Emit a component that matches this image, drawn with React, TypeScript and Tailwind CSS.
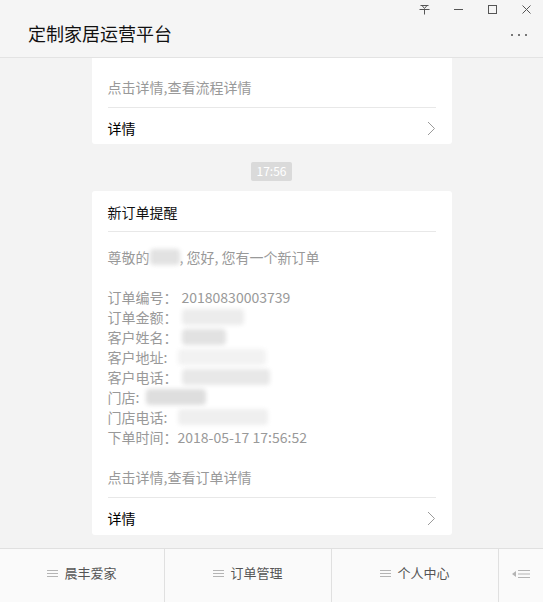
import React from 'react';

const font = { fontFamily: '"Noto Sans CJK SC", "Noto Sans", sans-serif' };

function Blur({ w, shade = 'bg-[#e4e4e4]', ml = 'ml-0' }: { w: string; shade?: string; ml?: string }) {
  return <span className={`inline-block align-middle h-[16px] ${w} ${ml} ${shade} rounded-sm blur-[2px]`} />;
}

function Chevron() {
  return (
    <svg width="9" height="15" viewBox="0 0 9 15" fill="none">
      <path d="M1 1 L7.5 7.5 L1 14" stroke="#9a9a9a" strokeWidth="1" />
    </svg>
  );
}

function MenuLines() {
  return (
    <svg width="11" height="9" viewBox="0 0 11 9" className="mr-[6px]">
      <path d="M0 1.5h11M0 4.5h11M0 7.5h11" stroke="#b4b4b4" strokeWidth="1" />
    </svg>
  );
}

export default function App() {
  const rows: [string, React.ReactNode][] = [
    ['订单编号：', <span className="ml-1">20180830003739</span>],
    ['订单金额：', <Blur w="w-[62px]" shade="bg-[#ececec]" ml="ml-1" />],
    ['客户姓名：', <Blur w="w-[44px]" shade="bg-[#e2e2e2]" ml="ml-1" />],
    ['客户地址:', <Blur w="w-[88px]" shade="bg-[#f2f2f2]" ml="ml-[11px]" />],
    ['客户电话：', <Blur w="w-[88px]" shade="bg-[#e8e8e8]" ml="ml-1" />],
    ['门店:', <Blur w="w-[60px]" shade="bg-[#dedede]" ml="ml-[7px]" />],
    ['门店电话:', <Blur w="w-[90px]" shade="bg-[#efefef]" ml="ml-[11px]" />],
    ['下单时间：', <span>2018-05-17 17:56:52</span>],
  ];

  return (
    <div className="w-[543px] h-[602px] flex flex-col bg-[#f3f3f3] overflow-hidden" style={font}>
      {/* title bar */}
      <header className="h-[58px] bg-[#f5f5f5] border-b border-[#e3e3e3] flex flex-col">
        <div className="h-[18px] flex justify-end items-center">
          <div className="w-[34px] flex justify-center">
            <svg width="11" height="11" viewBox="0 0 11 11" fill="none" stroke="#555" strokeWidth="1">
              <path d="M1.5 1.5h8M3 1.5l2.5 3l2.5-3M0.5 5.5h10M5.5 5.5v5" />
            </svg>
          </div>
          <div className="w-[34px] flex justify-center">
            <span className="block w-[9px] h-px bg-[#555]" />
          </div>
          <div className="w-[34px] flex justify-center">
            <span className="block w-[9px] h-[9px] border border-[#555]" />
          </div>
          <div className="w-[34px] flex justify-center">
            <svg width="9" height="9" viewBox="0 0 9 9" stroke="#555" strokeWidth="1">
              <path d="M0.5 0.5l8 8M8.5 0.5l-8 8" />
            </svg>
          </div>
        </div>
        <div className="h-[30px] flex items-center justify-between pl-[28px] pr-[16px]">
          <h1 className="text-[18px] leading-6 text-[#111]">定制家居运营平台</h1>
          <div className="flex gap-[5px] mt-1">
            <span className="w-[2px] h-[2px] bg-[#777]" />
            <span className="w-[2px] h-[2px] bg-[#777]" />
            <span className="w-[2px] h-[2px] bg-[#777]" />
          </div>
        </div>
      </header>

      {/* messages */}
      <main className="flex-1 flex flex-col items-center text-[14px] leading-5">
        <div className="w-[360px] bg-white rounded-b-[3px] px-4">
          <p className="pt-[19px] pb-[10px] text-[#999] border-b border-[#e8e8e8]">点击详情,查看流程详情</p>
          <div className="pt-[10px] pb-[6px] flex items-center justify-between text-black">
            <span>详情</span>
            <Chevron />
          </div>
        </div>

        <div className="mt-[18px] h-[19px] px-[6px] bg-[#dadada] text-white text-[12px] leading-[18px] rounded-[2px]">
          17:56
        </div>

        <div className="mt-[10px] w-[360px] bg-white rounded-[3px] px-4">
          <p className="pt-[11px] pb-[9px] text-[#111] border-b border-[#e8e8e8]">新订单提醒</p>
          <div className="pt-[15px] pb-[10px] text-[#999] border-b border-[#e8e8e8]">
            <p className="flex items-center">
              尊敬的
              <Blur w="w-[30px]" shade="bg-[#e2e2e2]" />
              , 您好, 您有一个新订单
            </p>
            <div className="h-5" />
            {rows.map(([label, value]) => (
              <p key={label} className="flex items-center h-5">
                <span>{label}</span>
                {value}
              </p>
            ))}
            <div className="h-5" />
            <p>点击详情,查看订单详情</p>
          </div>
          <div className="pt-[10px] pb-[7px] flex items-center justify-between text-black">
            <span>详情</span>
            <Chevron />
          </div>
        </div>
      </main>

      {/* bottom menu */}
      <footer className="h-[54px] bg-[#fafafa] border-t border-[#e0e0e0] grid grid-cols-[164px_167px_167px_1fr] text-[13px] text-[#555]">
        {['晨丰爱家', '订单管理', '个人中心'].map((t, i) => (
          <div key={t} className={`flex items-center justify-center pb-[5px] ${i > 0 ? 'border-l border-[#e0e0e0]' : ''}`}>
            <MenuLines />
            {t}
          </div>
        ))}
        <div className="border-l border-[#e0e0e0] flex items-center justify-center gap-[2px] pb-[4px]">
          <svg width="4" height="6" viewBox="0 0 4 6">
            <path d="M4 0L0 3L4 6Z" fill="#b4b4b4" />
          </svg>
          <svg width="12" height="10" viewBox="0 0 12 10">
            <path d="M0 1.5h12M0 5h12M0 8.5h12" stroke="#b4b4b4" strokeWidth="1" />
          </svg>
        </div>
      </footer>
    </div>
  );
}
